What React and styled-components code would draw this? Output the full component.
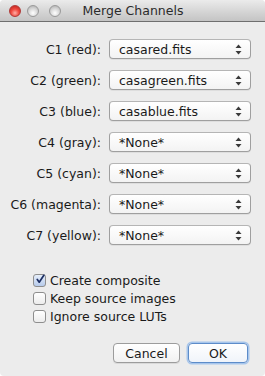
import React from 'react';
import styled, { createGlobalStyle } from 'styled-components';

const channels = [
    { label: 'C1 (red):', value: 'casared.fits' },
    { label: 'C2 (green):', value: 'casagreen.fits' },
    { label: 'C3 (blue):', value: 'casablue.fits' },
    { label: 'C4 (gray):', value: '*None*' },
    { label: 'C5 (cyan):', value: '*None*' },
    { label: 'C6 (magenta):', value: '*None*' },
    { label: 'C7 (yellow):', value: '*None*' },
];

const options = [
    { label: 'Create composite', checked: true },
    { label: 'Keep source images', checked: false },
    { label: 'Ignore source LUTs', checked: false },
];

const App = () => {
    return (
        <Window>
            <GlobalStyle />
            <TitleBar>
                <Lights>
                    <Light $color="red" />
                    <Light />
                    <Light />
                </Lights>
                <Title>Merge Channels</Title>
            </TitleBar>
            <Content>
                <Form>
                    {channels.map((c) => (
                        <React.Fragment key={c.label}>
                            <Label>{c.label}</Label>
                            <Select>
                                <span>{c.value}</span>
                                <svg width="7" height="11" viewBox="0 0 7 11">
                                    <path d="M3.5 0.5 L6.5 4 L0.5 4 Z" fill="#3a3a3a" />
                                    <path d="M3.5 10.5 L6.5 7 L0.5 7 Z" fill="#3a3a3a" />
                                </svg>
                            </Select>
                        </React.Fragment>
                    ))}
                </Form>
                <Checks>
                    {options.map((o) => (
                        <CheckRow key={o.label}>
                            <Box $checked={o.checked}>
                                {o.checked && (
                                    <svg width="13" height="13" viewBox="0 0 13 13">
                                        <path d="M3 6.5 L5.5 10 L11.5 1" fill="none" stroke="#1c2e63" strokeWidth="2.2" strokeLinecap="round" strokeLinejoin="round" />
                                    </svg>
                                )}
                            </Box>
                            <span>{o.label}</span>
                        </CheckRow>
                    ))}
                </Checks>
                <Buttons>
                    <Button>Cancel</Button>
                    <Button $primary>OK</Button>
                </Buttons>
            </Content>
        </Window>
    );
};

export default App;

// Style
const
    GlobalStyle = createGlobalStyle`
    body {
        margin: 0;
        background: #ffffff;
        font-family: "DejaVu Sans", "Liberation Sans", sans-serif;
        font-size: 12.5px;
        color: #1a1a1a;
    }
`,
    Window = styled.div`
    width: 265px;
    height: 376px;
    display: flex;
    flex-direction: column;
    background: #ececec;
    border-radius: 4px;
    overflow: hidden;
`,
    TitleBar = styled.div`
    height: 21px;
    flex: none;
    display: flex;
    align-items: center;
    position: relative;
    background: linear-gradient(#ebebeb, #d3d3d3 60%, #c4c4c4);
    border-bottom: 1px solid #6f6f6f;
`,
    Lights = styled.div`
    display: flex;
    gap: 6px;
    padding-left: 9px;
    & > :last-child {
        margin-left: 4px;
    }
`,
    Light = styled.div`
    width: 12px;
    height: 12px;
    border-radius: 50%;
    box-sizing: border-box;
    border: 1px solid ${p => p.$color === 'red' ? '#b03a38' : '#9a9a9a'};
    background: ${p => p.$color === 'red'
        ? 'radial-gradient(circle at 50% 70%, #ffb0a8, #f04a40 45%, #b81e17)'
        : 'radial-gradient(circle at 50% 70%, #ffffff, #d8d8d8 50%, #a8a8a8)'};
`,
    Title = styled.div`
    position: absolute;
    left: 0;
    right: 0;
    text-align: center;
    font-size: 12.5px;
    color: #2b2b2b;
    padding-left: 1px;
`,
    Content = styled.div`
    flex: 1;
    display: flex;
    flex-direction: column;
    padding: 17px 14px 0 0;
`,
    Form = styled.div`
    display: grid;
    grid-template-columns: 101px 142px;
    column-gap: 8px;
    row-gap: 11px;
`,
    Label = styled.div`
    text-align: right;
    align-self: center;
    white-space: nowrap;
    padding-top: 1px;
`,
    Select = styled.div`
    height: 20px;
    box-sizing: border-box;
    display: flex;
    align-items: center;
    justify-content: space-between;
    padding: 0 8px 0 8px;
    border: 1px solid #9f9f9f;
    border-top-color: #b5b5b5;
    border-radius: 4px;
    background: linear-gradient(#ffffff, #f3f3f3);
    box-shadow: 0 1px 0 rgba(0, 0, 0, 0.06);
    span {
        padding-left: 1px;
    }
`,
    Checks = styled.div`
    display: flex;
    flex-direction: column;
    gap: 3px;
    margin-top: 28px;
    padding-left: 33px;
`,
    CheckRow = styled.div`
    display: flex;
    align-items: center;
    gap: 4px;
    height: 15px;
`,
    Box = styled.div`
    width: 13px;
    height: 13px;
    box-sizing: border-box;
    border: 1px solid #8e8e8e;
    border-radius: 3px;
    background: ${p => p.$checked ? 'linear-gradient(#e6eefa, #b7cbeb)' : 'linear-gradient(#ffffff, #ececec)'};
    display: flex;
    align-items: flex-start;
    justify-content: center;
    svg {
        margin-top: -2px;
        margin-left: 1px;
    }
`,
    Buttons = styled.div`
    display: flex;
    justify-content: flex-end;
    gap: 8px;
    margin-top: 19px;
    padding-right: 3px;
`,
    Button = styled.div`
    width: ${p => p.$primary ? '60px' : '67px'};
    height: 20px;
    box-sizing: border-box;
    display: flex;
    align-items: center;
    justify-content: center;
    border-radius: 4px;
    border: 1px solid ${p => p.$primary ? '#5d8cc9' : '#9c9c9c'};
    background: ${p => p.$primary ? 'linear-gradient(#ffffff, #f0f4fa)' : 'linear-gradient(#ffffff, #f1f1f1)'};
    box-shadow: ${p => p.$primary ? '0 0 0 1.5px #a7c6ec' : '0 1px 0 rgba(0,0,0,0.08)'};
`;
